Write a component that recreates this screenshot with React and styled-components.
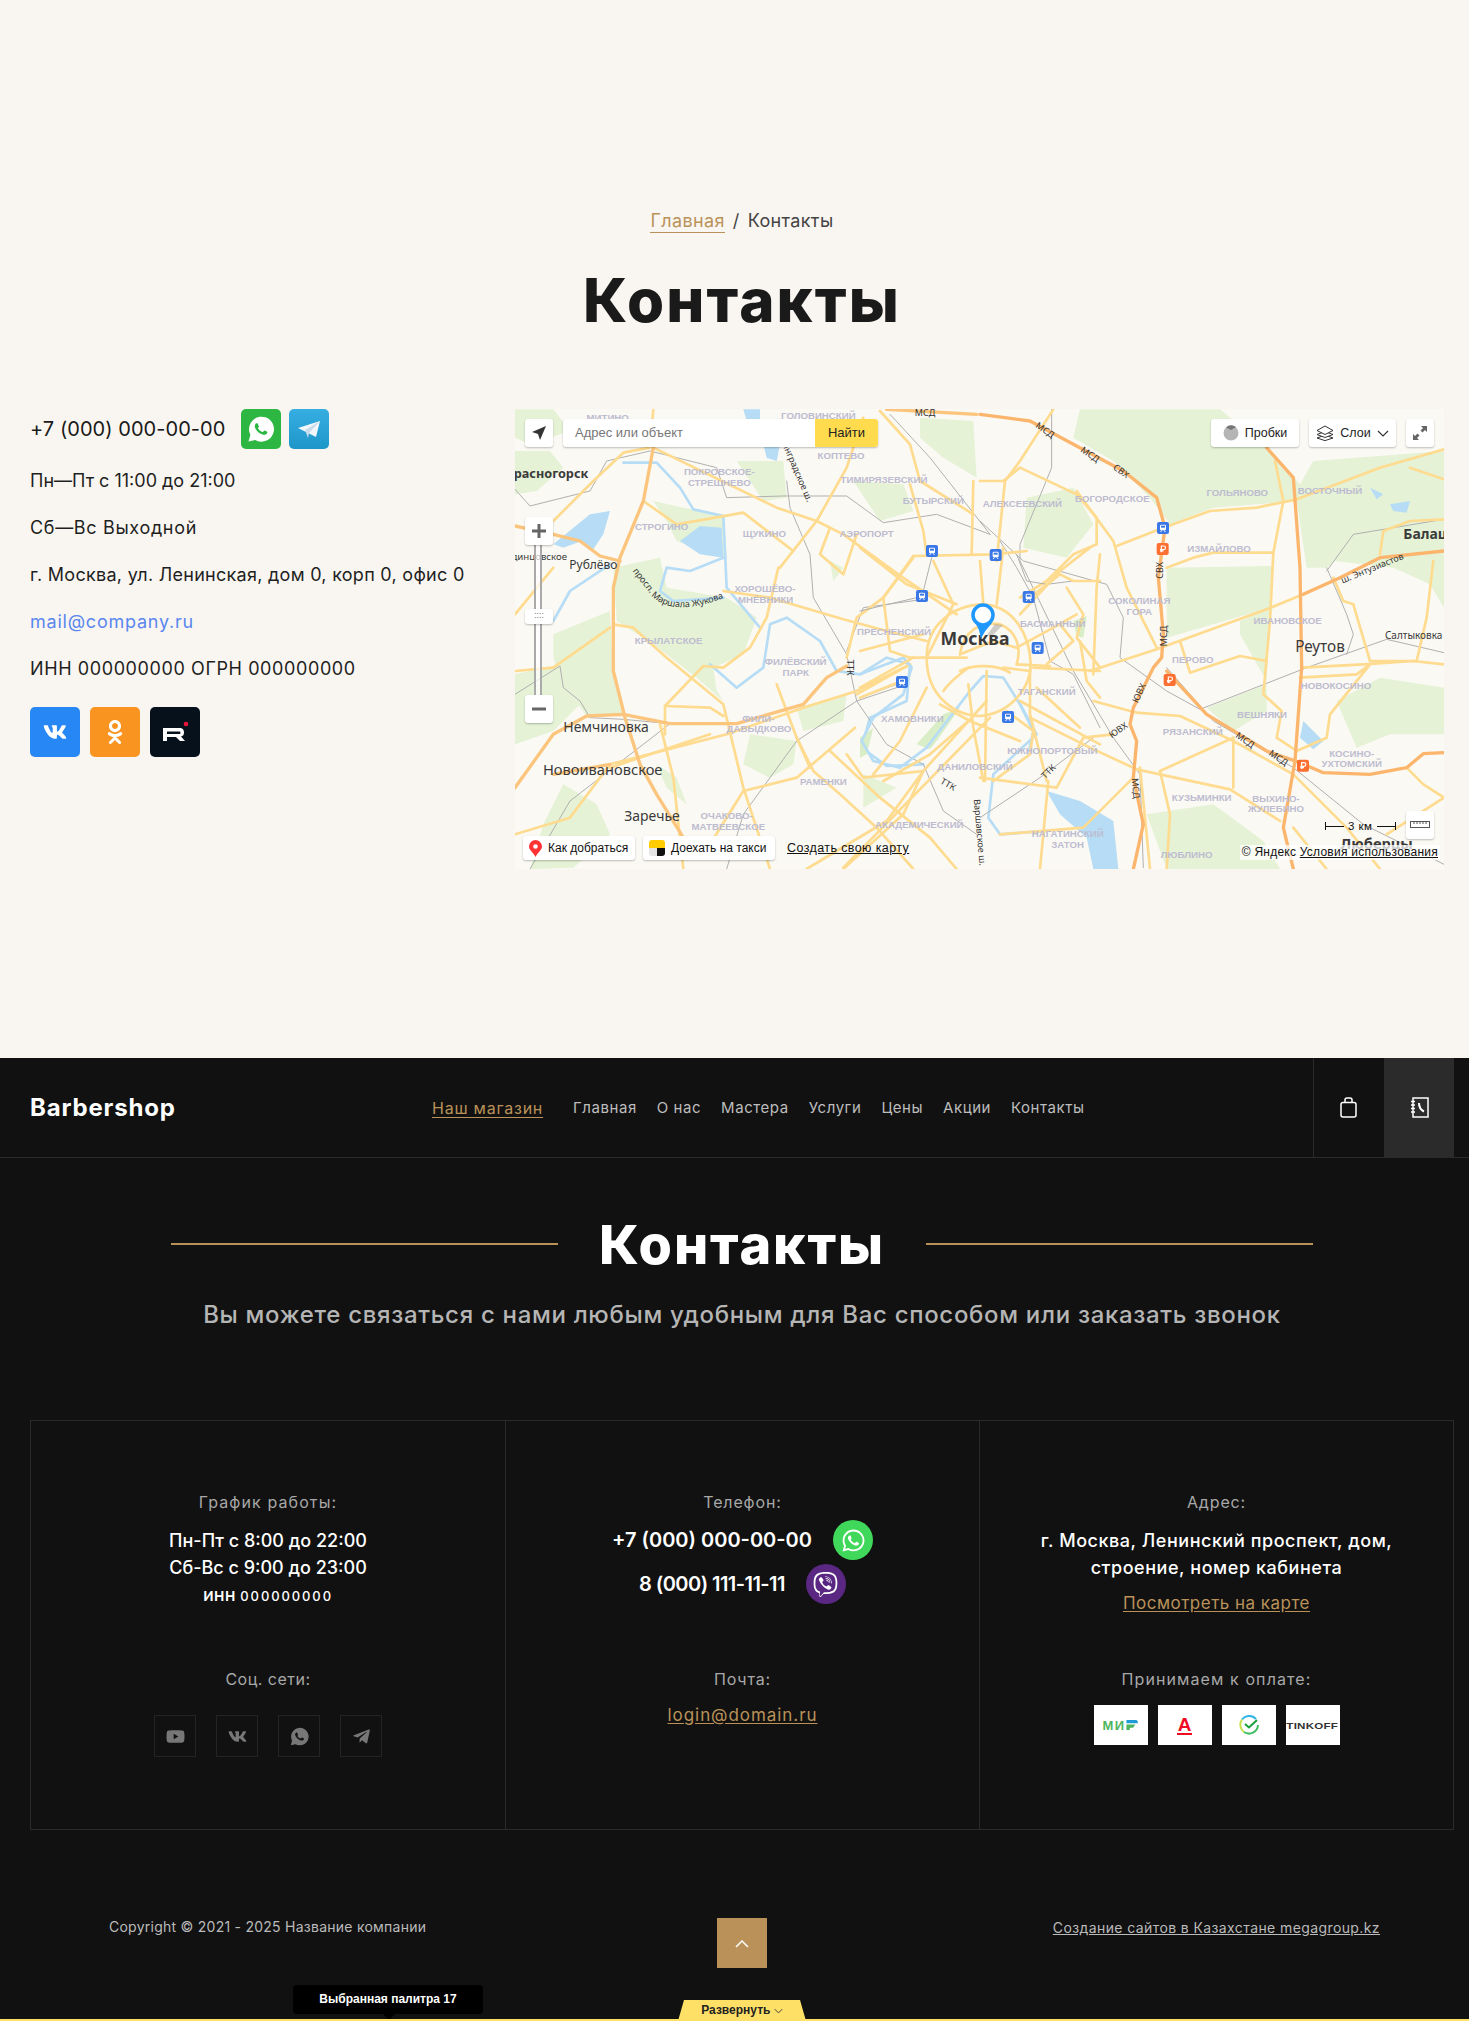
import React from "react";
import styled, { createGlobalStyle } from "styled-components";
import { FaYoutube, FaVk, FaWhatsapp, FaTelegramPlane, FaOdnoklassniki, FaViber } from "react-icons/fa";

const GlobalStyle = createGlobalStyle`
  html, body { margin: 0; padding: 0; background: #111; }
  * { box-sizing: border-box; }
  body { font-family: Inter, "Liberation Sans", sans-serif; }
  a { color: inherit; }
`;

const GOLD = "#ba9259";

const Page = styled.div`
  position: relative;
  width: 1469px;
  height: 2021px;
  overflow: hidden;
`;

/* top light section */
const LightSection = styled.section`
  height: 1058px;
  background: #f9f6f1;
  padding: 210px 15px 0 30px;
`;
const Crumbs = styled.div`
  display: flex;
  justify-content: center;
  gap: 8px;
  font-size: 18px;
  line-height: 22px;
  color: #444;
  letter-spacing: 0.02em;
`;
const CrumbLink = styled.a`
  color: ${GOLD};
  border-bottom: 1px solid ${GOLD};
`;
const PageTitle = styled.h1`
  margin: 31px 0 0;
  text-align: center;
  font-size: 60px;
  line-height: 72px;
  font-weight: 800;
  color: #1a1a1a;
  letter-spacing: 2.1px;
`;
const ContactsRow = styled.div`
  display: grid;
  grid-template-columns: 485px 929px;
  margin-top: 73px;
`;
const InfoColumn = styled.div`
  display: flex;
  flex-direction: column;
  align-items: flex-start;
`;
const PhoneRow = styled.div`
  display: flex;
  align-items: center;
  height: 40px;
  margin-bottom: 8px;
  font-size: 20px;
  color: #1a1a1a;
  letter-spacing: 0.05px;
`;
const PhoneTiles = styled.div`
  display: flex;
  gap: 8px;
  margin-left: 16px;
`;
const MessengerTile = styled.span`
  display: flex;
  align-items: center;
  justify-content: center;
  width: 40px;
  height: 40px;
  border-radius: 5px;
  background: ${(p) => p.$bg};
`;
const InfoLine = styled.div`
  height: 47px;
  line-height: 47px;
  font-size: 18px;
  color: ${(p) => p.$color || "#1f1f1f"};
  letter-spacing: ${(p) => p.$ls}px;
`;
const SocialRow = styled.div`
  display: flex;
  gap: 10px;
  margin-top: 15px;
`;
const SocialTile = styled.span`
  display: flex;
  align-items: center;
  justify-content: center;
  width: 50px;
  height: 50px;
  border-radius: 5px;
  background: ${(p) => p.$bg};
  color: #fff;
  font-size: 24px;
`;

/* map */
const MapBox = styled.div`
  position: relative;
  width: 929px;
  height: 460px;
  overflow: hidden;
  background: #faf8f2;
  font-family: "Liberation Sans", Arial, sans-serif;
`;
const MapPicture = styled.svg`
  display: block;
`;
const DistrictLabel = styled.text`
  font-family: "Liberation Sans", Arial, sans-serif;
  font-size: 29px;
  font-weight: 700;
  fill: #bdbcd0;
  text-anchor: middle;
`;
const CityLabel = styled.text`
  font-family: "Noto Sans", "Liberation Sans", sans-serif;
  font-size: ${(p) => p.$size || 42}px;
  font-weight: ${(p) => (p.$bold ? 700 : 400)};
  fill: #3a3a3a;
  text-anchor: ${(p) => p.$anchor || "middle"};
`;
const RoadLabel = styled.text`
  font-family: "Noto Sans", "Liberation Sans", sans-serif;
  font-size: 27px;
  fill: #333;
  text-anchor: middle;
`;
const MapTop = styled.div`
  position: absolute;
  top: 10px;
  left: 10px;
  right: 10px;
  display: flex;
  gap: 10px;
`;
const MapButton = styled.div`
  display: flex;
  align-items: center;
  justify-content: center;
  gap: 6px;
  height: 28px;
  min-width: 28px;
  width: ${(p) => p.$w || "28px"};
  background: #fff;
  border-radius: 3px;
  box-shadow: 0 1px 2px rgba(0, 0, 0, 0.25);
  font-size: 12.5px;
  color: #222;
`;
const SearchBox = styled.div`
  display: flex;
  width: 315px;
  height: 28px;
  background: #fff;
  border-radius: 3px;
  box-shadow: 0 1px 2px rgba(0, 0, 0, 0.25);
  overflow: hidden;
`;
const SearchInput = styled.div`
  flex: 1;
  padding-left: 12px;
  font-size: 13px;
  line-height: 28px;
  color: #777;
`;
const SearchSubmit = styled.div`
  width: 63px;
  text-align: center;
  background: #ffdb4d;
  font-size: 13px;
  line-height: 28px;
  color: #222;
`;
const TopSpacer = styled.div`
  flex: 1;
`;
const ZoomBar = styled.div`
  position: absolute;
  left: 10px;
  top: 108px;
  width: 28px;
  height: 206px;
  display: flex;
  flex-direction: column;
  align-items: center;
  justify-content: space-between;
`;
const ZoomTrack = styled.div`
  position: absolute;
  top: 20px;
  bottom: 20px;
  left: 9px;
  width: 8px;
  border-left: 2px solid #aaa;
  border-right: 2px solid #aaa;
  background: rgba(255, 255, 255, 0.7);
`;
const ZoomThumb = styled.div`
  position: absolute;
  top: 92px;
  left: 0;
  width: 28px;
  height: 15px;
  background: #fff;
  border-radius: 3px;
  box-shadow: 0 1px 2px rgba(0, 0, 0, 0.25);
  text-align: center;
  font-size: 9px;
  line-height: 13px;
  color: #777;
`;
const ZoomButton = styled(MapButton)`
  position: relative;
  font-size: 0;
`;
const MapBottom = styled.div`
  position: absolute;
  left: 8px;
  top: 427px;
  display: flex;
  align-items: center;
  gap: 8px;
`;
const RouteButton = styled.div`
  display: flex;
  align-items: center;
  gap: 6px;
  height: 24px;
  padding: 0 6px;
  width: ${(p) => p.$w};
  background: #fff;
  border-radius: 3px;
  box-shadow: 0 1px 2px rgba(0, 0, 0, 0.25);
  font-size: 12px;
  color: #111;
  white-space: nowrap;
`;
const MapLink = styled.a`
  margin-left: 4px;
  font-size: 12.5px;
  letter-spacing: 0.4px;
  color: #111;
  text-decoration: underline;
`;
const Attribution = styled.div`
  position: absolute;
  right: 4px;
  bottom: 9px;
  padding: 0 2px;
  background: rgba(255, 255, 255, 0.75);
  font-size: 12px;
  line-height: 15px;
  letter-spacing: 0.02em;
  color: #111;
  u { text-decoration: underline; }
`;
const ScaleBar = styled.div`
  position: absolute;
  left: 810px;
  top: 411px;
  display: flex;
  align-items: center;
  gap: 4px;
  font-size: 11.5px;
  letter-spacing: 0.5px;
  color: #111;
`;
const ScaleLine = styled.span`
  width: 19px;
  height: 8px;
  background: linear-gradient(#111, #111) center / 100% 1px no-repeat;
  border-left: ${(p) => (p.$left ? "1px solid #111" : "none")};
  border-right: ${(p) => (p.$left ? "none" : "1px solid #111")};
`;
const RulerButton = styled(MapButton)`
  position: absolute;
  left: 891px;
  top: 402px;
`;

/* dark part */
const DarkSection = styled.section`
  height: 963px;
  background: #111;
  color: #fff;
`;
const Header = styled.header`
  display: flex;
  align-items: center;
  height: 100px;
  padding: 0 15px 0 30px;
  border-bottom: 1px solid #2a2a2a;
`;
const Logo = styled.div`
  width: 402px;
  font-size: 24px;
  font-weight: 700;
  letter-spacing: 0.035em;
`;
const ShopLink = styled.a`
  margin-right: 30px;
  font-size: 16px;
  color: ${GOLD};
  text-decoration: underline;
  text-underline-offset: 3px;
  letter-spacing: 0.77px;
`;
const Nav = styled.nav`
  display: flex;
  gap: 20px;
  font-size: 15px;
  color: #bdbdbd;
  letter-spacing: 0.55px;
`;
const HeaderIcons = styled.div`
  display: flex;
  align-self: stretch;
  margin-left: auto;
  border-left: 1px solid #2a2a2a;
`;
const HeaderCell = styled.div`
  display: flex;
  align-items: center;
  justify-content: center;
  width: 70px;
  background: ${(p) => (p.$active ? "#2b2b2b" : "transparent")};
`;
const CenterWrap = styled.div`
  padding: 0 15px 0 30px;
`;
const SectionHead = styled.div`
  display: flex;
  align-items: center;
  justify-content: center;
  gap: 41px;
  margin-top: 50px;
`;
const HeadLine = styled.span`
  width: 387px;
  height: 2px;
  background: ${GOLD};
  margin-top: -2px;
`;
const SectionTitle = styled.h2`
  margin: 0;
  font-size: 54px;
  line-height: 74px;
  font-weight: 800;
  letter-spacing: 0.035em;
`;
const SectionLead = styled.p`
  margin: 18px 0 0;
  text-align: center;
  font-size: 24px;
  line-height: 30px;
  font-weight: 500;
  color: #b5b5b5;
  letter-spacing: 0.68px;
`;
const InfoGrid = styled.div`
  display: grid;
  grid-template-columns: 474px 474px 1fr;
  width: 1424px;
  height: 410px;
  margin: 90px 0 0 30px;
  border: 1px solid #2a2a2a;
`;
const InfoCell = styled.div`
  padding-top: 69px;
  text-align: center;
  border-left: ${(p) => (p.$first ? "none" : "1px solid #2a2a2a")};
`;
const InfoBlock = styled.div`
  display: flex;
  flex-direction: column;
  align-items: center;
  height: 177px;
  &:last-child { height: auto; }
`;
const BlockLabel = styled.div`
  height: 24px;
  line-height: 24px;
  font-size: 16px;
  color: #a8a8a8;
  letter-spacing: ${(p) => p.$ls ?? 0.86}px;
`;
const BlockValue = styled.div`
  margin-top: 13px;
  font-size: 18px;
  line-height: 27px;
  font-weight: 500;
  letter-spacing: ${(p) => p.$ls}px;
`;
const SmallZero = styled.span`
  font-size: 13px;
  letter-spacing: 1.9px;
`;
const PhoneLine = styled.div`
  display: flex;
  align-items: center;
  gap: 21px;
  height: 40px;
  font-size: 20px;
  font-weight: 600;
  letter-spacing: ${(p) => p.$ls}px;
  & + & { margin-top: 4px; }
`;
const RoundIcon = styled.span`
  display: flex;
  align-items: center;
  justify-content: center;
  width: 40px;
  height: 40px;
  border-radius: 50%;
  background: ${(p) => p.$bg};
  color: #fff;
  font-size: 25px;
`;
const PhoneStack = styled.div`
  margin-top: 6px;
  display: flex;
  flex-direction: column;
  align-items: center;
`;
const GoldLink = styled.a`
  display: block;
  margin-top: ${(p) => p.$top}px;
  font-size: 17px;
  line-height: 24px;
  color: ${GOLD};
  text-decoration: underline;
  text-underline-offset: 2px;
  letter-spacing: ${(p) => p.$ls}px;
`;
const DarkSocials = styled.div`
  display: flex;
  gap: 20px;
  margin-top: 24px;
`;
const DarkSocial = styled.span`
  display: flex;
  align-items: center;
  justify-content: center;
  width: 42px;
  height: 42px;
  border: 1px solid #242424;
  color: #777;
  font-size: 19px;
`;
const PayRow = styled.div`
  display: flex;
  gap: 10px;
  margin-top: 14px;
`;
const PayCard = styled.div`
  display: flex;
  align-items: center;
  justify-content: center;
  width: 54px;
  height: 40px;
  background: #fff;
  font-family: "Liberation Sans", Arial, sans-serif;
  font-weight: 700;
`;
const MirMark = styled.span`
  display: flex;
  align-items: center;
  gap: 1px;
  font-size: 13px;
  letter-spacing: 0.1em;
  color: #4db45e;
`;
const AlfaMark = styled.span`
  font-size: 19px;
  line-height: 17px;
  color: #ef0c24;
  border-bottom: 2px solid #ef0c24;
  padding: 0 1px;
`;
const TinkoffMark = styled.span`
  font-size: 9.5px;
  letter-spacing: 0.02em;
  color: #333;
  transform: scaleX(1.22);
`;
const Footer = styled.footer`
  display: grid;
  grid-template-columns: 717px 50px 1fr;
  align-items: start;
  margin-top: 88px;
  padding-right: 89px;
`;
const Copyright = styled.div`
  padding: 0 0 0 109px;
  font-size: 14px;
  line-height: 18px;
  letter-spacing: 0.25px;
  color: #bbb;
`;
const ToTop = styled.div`
  display: flex;
  align-items: center;
  justify-content: center;
  height: 50px;
  background: ${GOLD};
`;
const MadeBy = styled.a`
  justify-self: end;
  font-size: 14px;
  line-height: 20px;
  letter-spacing: 0.4px;
  color: #bbb;
  text-decoration: underline;
`;

/* editor strip over the page */
const PaletteTip = styled.div`
  position: absolute;
  left: 293px;
  top: 1985px;
  width: 190px;
  height: 29px;
  background: #000;
  border-radius: 4px;
  font-family: "Liberation Sans", Arial, sans-serif;
  font-size: 12px;
  font-weight: 700;
  line-height: 29px;
  text-align: center;
  color: #fff;
  &::after {
    content: "";
    position: absolute;
    left: 90px;
    bottom: -6px;
    border: 6px solid transparent;
    border-bottom: 0;
    border-top-color: #000;
  }
`;
const EditorLine = styled.div`
  position: absolute;
  left: 0;
  right: 0;
  bottom: 0;
  height: 2px;
  background: #ffe066;
`;
const ExpandTab = styled.div`
  position: absolute;
  left: 678px;
  bottom: 0;
  width: 128px;
  height: 21px;
  background: #ffe066;
  clip-path: polygon(6px 0, 122px 0, 128px 100%, 0 100%);
  font-family: "Liberation Sans", Arial, sans-serif;
  font-size: 12px;
  font-weight: 700;
  line-height: 21px;
  text-align: center;
  color: #222;
`;

/* map data, traced at 3x: west part, east part and the city centre */
const westGreen = [
  "M310 500L450 470L470 560L650 590L740 650L700 760L610 800L620 870L640 900L560 830L430 730L320 660Z",
  "M130 700L300 630L310 810L345 940L230 945L140 820L130 760Z",
  "M15 820L150 790L210 910L130 990L15 1030Z",
  "M430 300L520 320L640 340L650 470L500 420L470 360Z",
  "M15 150L120 150L160 200L80 270L15 280Z",
  "M1230 50L1390 60L1400 230L1300 170L1230 110Z",
  "M1030 240L1180 250L1210 330L1110 360Z",
  "M680 180L820 180L830 290L760 300Z",
  "M860 920L1010 880L1000 960L880 990Z",
  "M160 1150L260 1210L300 1300L190 1400L60 1404L100 1270Z",
  "M440 1090L500 1130L530 1210L470 1160Z",
  "M720 1000L860 1020L850 1090L780 1130L700 1090Z",
  "M15 25L130 25L180 90L60 130L15 110Z",
  "M1060 1120L1160 1160L1060 1220Z",
  "M960 480L1000 500L970 540Z",
];
const eastGreen = [
  "M300 25L720 25L860 140L960 250L1000 180L1392 150L1392 350L1200 370L1040 500L980 500L950 300L700 320L570 370L510 290L400 180L280 110Z",
  "M560 500L880 495L870 620L560 710Z",
  "M780 660L870 620L860 840L780 700Z",
  "M140 290L280 260L340 370L260 470L130 440Z",
  "M980 470L1200 370L1392 350L1392 620L1350 550L1240 500Z",
  "M1070 900L1200 830L1392 860L1392 1000L1230 1000L1130 1040Z",
  "M680 920L860 850L860 930L760 990Z",
  "M500 1240L700 1210L850 1320L900 1404L560 1404Z",
];
const westWater = [
  "M130 430L240 340L300 330L280 400L250 445L215 420L160 440Z",
  "M510 420L570 375L635 380L640 470L570 460Z",
  "M760 130L810 130L800 180L770 170Z",
  "M700 25L750 25L750 60L710 60Z",
];
const westRivers = [
  "M340 185L440 185L510 260L550 325L640 345L650 560L700 620L750 680",
  "M640 470L540 510L470 500L450 570L490 600L640 590",
  "M130 660L180 570L300 490",
  "M600 790L680 860L760 800L780 670L830 650L930 720L980 810L1050 820L1130 770L1200 790L1190 900L1080 950L1055 1040L1130 1095L1240 1090",
];
const eastRivers = ["M120 909L170 1000L40 1120L25 1250L60 1300L200 1290"];
const eastWater = [
  "M200 1170L300 1200L400 1260L415 1404L340 1404L320 1310L240 1240Z",
  "M1230 310L1290 300L1280 335L1240 330Z",
  "M970 960L1030 1020L1000 1045L960 1010Z",
  "M1170 260L1210 280L1190 295Z",
];
const westRoads = [
  "M430 140L800 320L920 360L1000 400L1165 520L1340 640",
  "M810 500L920 360L1010 200L1060 50",
  "M805 500L770 650L720 740L640 800L580 795L465 915L465 1000",
  "M130 360L250 240L340 155L420 140L430 25",
  "M310 670L370 680L470 770L640 910L700 1160L780 1404",
  "M640 570L780 590L1000 655L1130 690L1250 720",
  "M1210 465L1120 590L1040 650L1010 770",
  "M1200 790L1040 880",
  "M15 1300L180 1250L300 1090L650 1000L880 920L1040 870L1200 790",
  "M860 1010L910 1110L990 1180L1100 1280L1210 1404",
  "M960 1050L1110 1190L1260 1310L1340 1404",
  "M1035 980L860 1130L700 1170L600 1330",
  "M1240 1110L1180 1240L1000 1404",
  "M1430 900L1240 1110L1060 1130L1010 1060",
  "M1240 1110L1130 1260L890 1404",
  "M450 970L490 1130L520 1404",
  "M800 850L860 1010L900 1100",
  "M400 300L500 370L700 335L850 450",
  "M1040 400L1000 520L930 460L960 380",
  "M1390 240L1385 460",
  "M1200 250L1240 390L1250 460",
  "M1110 30L1200 130L1230 240L1390 340",
  "M1000 1400L1440 950",
  "M15 810L130 800L300 680",
  "M130 500L15 640",
  "M300 1100L600 1000",
  "M465 915L600 920L640 945",
];
const eastRoads = [
  "M0 240L70 240L120 200L290 280L350 350L350 430L280 460L200 540L120 590",
  "M220 25L120 180L75 240L50 480",
  "M340 820L350 560L360 460",
  "M290 270L400 420L440 560L530 740",
  "M330 810L530 745L860 625L970 580",
  "M550 380L690 330L830 320L950 295L1200 200L1392 145",
  "M410 435L550 380",
  "M1290 200L1392 235",
  "M560 500L640 470L700 455L880 455L910 300L885 180",
  "M880 455L870 660L850 880L905 930L890 1010L950 1050",
  "M600 720L630 815L780 765L860 780",
  "M340 900L470 935L600 945L760 1020L940 1120L1100 1280L1200 1404",
  "M0 1130L230 1160L310 1010L400 1000",
  "M150 950L330 1040L470 1105L750 1165L900 1260",
  "M540 1110L760 1010L760 1160",
  "M540 1110L570 1240L560 1404",
  "M205 1140L180 1404",
  "M480 1100L510 1404",
  "M60 1300L310 1280L460 1130",
  "M965 800L1150 790L1300 780L1392 790",
  "M1170 780L1120 610L1090 600L1060 530",
  "M960 830L1130 820L1170 790L1050 940L1040 1010L950 1050",
  "M1170 780L1310 780L1340 650L1360 480",
  "M1280 1100L1330 1150L1392 1190L1220 1300",
  "M1200 460L1210 390L1290 360L1392 355",
  "M940 1280L1040 1404",
];
const westHighways = [
  "M430 140L400 300L330 470L310 560L310 810L345 950L390 1090L440 1180L520 1310",
  "M15 375L130 400L210 420L270 465L330 480",
  "M15 1160L130 1000L230 945L340 940L480 968L680 968L880 910L950 830L1010 795",
  "M1130 25L1400 40",
  "M130 1120L300 1090",
];
const eastHighways = [
  "M0 40L150 60L280 130L430 210L530 290L555 380L535 530L550 700L545 770L520 800L460 920L450 970L470 1020L460 1130L490 1270L460 1404",
  "M560 810L680 940L860 1050L960 1085L1030 1115L1170 1120L1280 1100L1330 1058L1392 1055",
  "M970 580L1080 530L1200 470L1392 450",
  "M860 140L940 230L960 500L965 800L945 1080L910 1280L940 1404",
];
const westRails = [
  "M15 265L60 315L240 270L290 180L420 150L620 200L650 290L820 285L1010 285L1120 365L1280 340L1440 400",
  "M15 880L150 795L160 860L210 900L240 950L340 955L480 968L180 1200L60 1404",
  "M1140 40L1260 170L1440 400",
  "M830 240L840 320L900 460L910 590L1010 760L1040 900L1130 1030L1240 1090L1300 1230L1400 1300",
  "M1240 595L1060 620L1010 750",
  "M1160 860L1040 900L860 1020L700 1240L650 1404",
];
const eastRails = [
  "M215 25L215 200L120 430L120 480L280 810L400 1010L480 1120L490 1400",
  "M0 360L130 480L380 550L430 650L420 770L560 870L660 925L980 800L1220 715L1392 755",
  "M1040 500L1100 640L1120 700L1100 760",
  "M1040 510L1120 400L1392 355",
  "M560 800L700 960L940 1100L1150 1270L1392 1390",
  "M0 1250L180 1130L340 1010",
];
const centerGreen = [
  "M250 520L300 500L230 600L210 625L170 610Z",
  "M640 240L680 225L670 290L650 285Z",
  "M0 590L40 560L20 640L0 650Z",
];
const centerRivers = [
  "M200 620L330 450L370 405L430 410L480 490L520 570L505 640",
  "M0 400L130 350L155 380L130 460L40 530L5 600L40 660L120 680L200 620",
];
const centerRails = [
  "M420 0L470 80L520 170L570 360L640 400L720 560",
  "M0 210L170 170",
  "M470 40L500 120L560 130L640 120L720 120",
  "M0 470L110 430",
  "M215 50L190 150",
];
const centerRoads = [
  "M200 350C200 250 280 192 370 190C460 195 510 280 512 370C512 450 440 520 360 525C290 525 200 470 200 350Z",
  "M300 340C310 270 360 240 420 250C470 270 485 320 470 370",
  "M300 390C340 370 410 370 450 395",
  "M250 450C270 420 300 400 325 380",
  "M0 20L140 130L290 190",
  "M160 45L400 40L500 30",
  "M160 50L70 170L90 330L150 350L320 350",
  "M220 60L280 190",
  "M360 60L370 190",
  "M430 20L410 190",
  "M510 170L600 100L640 120L720 120",
  "M480 220L600 90L690 20",
  "M620 140L670 220L650 290L720 380",
  "M470 320L580 260L650 220",
  "M520 380L720 390",
  "M470 370L570 375",
  "M510 390L510 520L560 720",
  "M0 330L190 280",
  "M0 440L160 350",
  "M200 440L120 600L40 700",
  "M240 490L330 540L480 600",
  "M325 540L210 640L70 720",
  "M380 390L375 720",
  "M325 430L340 560L370 720",
  "M480 480L720 610",
  "M440 510L520 570L510 640L400 720",
  "M0 470L125 420",
  "M530 440L660 560",
  "M660 300L680 420L720 470",
  "M600 250L640 300L560 370",
  "M280 190L200 350",
  "M300 340L400 300L470 320",
  "M430 380L510 390",
];
const westDistricts = [
  ["МИТИНО", 293, 60], ["ГОЛОВИНСКИЙ", 925, 54], ["КОПТЕВО", 993, 174], ["ПОКРОВСКОЕ-", 628, 223],
  ["СТРЕШНЕВО", 628, 255], ["ТИМИРЯЗЕВСКИЙ", 1122, 247], ["БУТЫРСКИЙ", 1270, 308], ["СТРОГИНО", 455, 386],
  ["ЩУКИНО", 763, 408], ["АЭРОПОРТ", 1070, 407], ["ХОРОШЁВО-", 765, 573], ["МНЁВНИКИ", 767, 605],
  ["ПРЕСНЕНСКИЙ", 1152, 701], ["КРЫЛАТСКОЕ", 476, 730], ["ФИЛЁВСКИЙ", 857, 792], ["ПАРК", 857, 824],
  ["ХАМОВНИКИ", 1207, 964], ["ФИЛИ-", 745, 962], ["ДАВЫДКОВО", 747, 994], ["РАМЕНКИ", 940, 1152],
  ["ОЧАКОВО-", 650, 1254], ["МАТВЕЕВСКОЕ", 655, 1286], ["АКАДЕМИЧЕСКИЙ", 1228, 1280], ["ДАНИЛОВСКИЙ", 1395, 1108],
];
const eastDistricts = [
  ["АЛЕКСЕЕВСКИЙ", 127, 317], ["БОГОРОДСКОЕ", 397, 303], ["ГОЛЬЯНОВО", 772, 284], ["ВОСТОЧНЫЙ", 1050, 278],
  ["ИЗМАЙЛОВО", 717, 454], ["СОКОЛИНАЯ", 478, 610], ["ГОРА", 478, 642], ["БАСМАННЫЙ", 218, 677],
  ["ИВАНОВСКОЕ", 923, 668], ["ПЕРОВО", 638, 787], ["НОВОКОСИНО", 1068, 863], ["ТАГАНСКИЙ", 200, 883],
  ["ВЕШНЯКИ", 846, 951], ["РЯЗАНСКИЙ", 638, 1001], ["КОСИНО-", 1115, 1067], ["УХТОМСКИЙ", 1115, 1098],
  ["ЮЖНОПОРТОВЫЙ", 217, 1058], ["КУЗЬМИНКИ", 665, 1200], ["ВЫХИНО-", 888, 1202], ["ЖУЛЕБИНО", 888, 1234],
  ["НАГАТИНСКИЙ", 263, 1309], ["ЗАТОН", 263, 1341], ["ЛЮБЛИНО", 620, 1372],
];
const eastRoadNames = [
  ["МСД", 190, 95, 35], ["МСД", 325, 168, 35], ["СВХ", 418, 218, 35], ["СВХ", 550, 508, -90],
  ["МСД", 560, 705, -90], ["ЮВХ", 486, 880, -65], ["ЮВХ", 420, 995, -35], ["ТТК", 212, 1118, -45],
  ["МСД", 458, 1163, 85], ["МСД", 790, 1025, 35], ["МСД", 890, 1078, 35], ["ш. Энтузиастов", 1180, 510, -22],
];
const westRoadNames = [["ТТК", 1010, 800, 90], ["ТТК", 1310, 1158, 30], ["МСД", 1245, 45, 0], ["Варшавское ш.", 1400, 1295, 85]];
const blueStops = [[549, 381], [47, 462], [146, 588], [173, 741], [84, 948]];
const blueStopsWest = [[1266, 450], [1236, 585], [1176, 843]];
const orangeStops = [[548, 444], [569, 837], [969, 1094]];

const Lines = ({ items, color, width }) => (
  <g fill="none" stroke={color} strokeWidth={width} strokeLinejoin="round" strokeLinecap="round">
    {items.map((d) => (
      <path key={d} d={d} />
    ))}
  </g>
);
const Areas = ({ items, color }) => (
  <g fill={color}>
    {items.map((d) => (
      <path key={d} d={d} />
    ))}
  </g>
);
const Stop = ({ x, y, color, rub }) => (
  <g transform={`translate(${x - 18} ${y - 18})`}>
    <rect width="36" height="36" rx="6" fill={color} />
    {rub ? (
      <path d="M14 28V9h7a5 5 0 0 1 0 11h-11M10 24h11" fill="none" stroke="#fff" strokeWidth="3.5" />
    ) : (
      <g>
        <rect x="9" y="8" width="18" height="17" rx="4" fill="#fff" />
        <rect x="12" y="11" width="12" height="6" fill={color} />
        <path d="M11 30l3-5M25 30l-3-5" stroke="#fff" strokeWidth="3" />
      </g>
    )}
  </g>
);

const MoscowMap = () => (
  <MapPicture width="929" height="460" viewBox="0 0 929 460">
    <rect width="929" height="460" fill="#fbf9f3" />
    <g transform="translate(-5 -8) scale(.33333)">
      <Areas items={westGreen} color="#e5f2d6" />
      <Areas items={westWater} color="#b6ddf5" />
      <Lines items={westRivers} color="#b6ddf5" width={8} />
      <Lines items={westRails} color="#b0b0b0" width={3} />
      <Lines items={westRoads} color="#fedb8e" width={8} />
      <Lines items={westHighways} color="#fcc57e" width={10} />
    </g>
    <g transform="translate(465 -8) scale(.33333)">
      <Areas items={eastGreen} color="#e5f2d6" />
      <Areas items={eastWater} color="#b6ddf5" />
      <Lines items={eastRivers} color="#b6ddf5" width={8} />
      <Lines items={eastRails} color="#b0b0b0" width={3} />
      <Lines items={eastRoads} color="#fedb8e" width={8} />
      <Lines items={eastHighways} color="#fcb56c" width={10} />
    </g>
    <g transform="translate(345 132) scale(.33333)">
      <Areas items={centerGreen} color="#d9edc6" />
      <Lines items={centerRivers} color="#b6ddf5" width={8} />
      <Lines items={centerRails} color="#b0b0b0" width={3} />
      <Lines items={centerRoads} color="#fedb8e" width={8} />
    </g>
    <g transform="translate(-5 -8) scale(.33333)">
      {westDistricts.map(([t, x, y]) => (
        <DistrictLabel key={t} x={x} y={y}>{t}</DistrictLabel>
      ))}
      {westRoadNames.map(([t, x, y, r]) => (
        <RoadLabel key={t + x} transform={`translate(${x} ${y}) rotate(${r})`}>{t}</RoadLabel>
      ))}
      <path id="zhukova" d="M358 498L430 590Q500 650 655 585" fill="none" />
      <RoadLabel>
        <textPath href="#zhukova" startOffset="50%">просп. Маршала Жукова</textPath>
      </RoadLabel>
      <path id="lening" d="M770 30L830 160L915 360" fill="none" />
      <RoadLabel>
        <textPath href="#lening" startOffset="50%">Ленинградское ш.</textPath>
      </RoadLabel>
      <CityLabel x="235" y="232" $anchor="end" $bold $size={38}>Красногорск</CityLabel>
      <CityLabel x="250" y="503" $size={36}>Рублёво</CityLabel>
      <CityLabel x="77" y="476" $size={29}>Одинцовское</CityLabel>
      <CityLabel x="288" y="992">Немчиновка</CityLabel>
      <CityLabel x="278" y="1122" $size={44}>Новоивановское</CityLabel>
      <CityLabel x="426" y="1259">Заречье</CityLabel>
      {blueStopsWest.map(([x, y]) => (
        <Stop key={x} x={x} y={y} color="#3b78e7" />
      ))}
    </g>
    <g transform="translate(465 -8) scale(.33333)">
      {eastDistricts.map(([t, x, y]) => (
        <DistrictLabel key={t} x={x} y={y}>{t}</DistrictLabel>
      ))}
      {eastRoadNames.map(([t, x, y, r]) => (
        <RoadLabel key={t + x} transform={`translate(${x} ${y}) rotate(${r})`}>{t}</RoadLabel>
      ))}
      <CityLabel x="1270" y="415" $anchor="start" $bold>Балашиха</CityLabel>
      <CityLabel x="1020" y="752" $size={46}>Реутов</CityLabel>
      <CityLabel x="1215" y="714" $anchor="start" $size={30}>Салтыковка</CityLabel>
      <CityLabel x="1190" y="1345" $bold $size={44}>Люберцы</CityLabel>
      <CityLabel x="-15" y="732" $size={53} $bold>Москва</CityLabel>
      {blueStops.map(([x, y]) => (
        <Stop key={x} x={x} y={y} color="#3b78e7" />
      ))}
      {orangeStops.map(([x, y]) => (
        <Stop key={x} x={x} y={y} color="#fd6f30" rub />
      ))}
    </g>
    {/* pin */}
    <path d="M472 226l8-11 8 1-10 10z" fill="#777" opacity=".35" />
    <path d="M460 214Q465 220 465.700 230Q470 221 477 214Z" fill="#1e98ff" />
    <circle cx="468" cy="206" r="10" fill="#fff" stroke="#1e98ff" strokeWidth="3.500" />
  </MapPicture>
);

const GeoIcon = () => (
  <svg width="16" height="16" viewBox="0 0 16 16"><path d="M15 1L1 7l6 2 2 6z" fill="#333" /></svg>
);
const PlusIcon = ({ minus }) => (
  <svg width="14" height="14" viewBox="0 0 14 14">
    <rect x="0" y="5.5" width="14" height="3" fill="#666" />
    {!minus && <rect x="5.5" y="0" width="3" height="14" fill="#666" />}
  </svg>
);
const TrafficIcon = () => (
  <svg width="16" height="16" viewBox="0 0 16 16">
    <circle cx="8" cy="8" r="7.5" fill="#b5b5b5" />
    <path d="M3 2.5A7.5 7.5 0 0 1 13 2L8 5z" fill="#777" />
  </svg>
);
const LayersIcon = () => (
  <svg width="18" height="16" viewBox="0 0 18 16" fill="#fff" stroke="#333">
    <path d="M9 10l8 3-8 2.6L1 13z" />
    <path d="M9 6.5l8 3-8 3-8-3z" />
    <path d="M9 1l8 4.5-8 4-8-4z" />
  </svg>
);
const ChevronDown = ({ stroke = "#333", w = 12, h = 7 }) => (
  <svg width={w} height={h} viewBox="0 0 12 7" fill="none" stroke={stroke} strokeWidth="1.2"><path d="M1 1l5 5 5-5" /></svg>
);
const ExpandIcon = () => (
  <svg width="14" height="14" viewBox="0 0 14 14" fill="#666">
    <path d="M14 0v6l-2-2-2.5 2.5-2-2L10 2 8 0zM0 14V8l2 2 2.5-2.5 2 2L4 12l2 2z" />
  </svg>
);
const RulerIcon = () => (
  <svg width="20" height="8" viewBox="0 0 20 8" fill="none" stroke="#555">
    <rect x=".5" y=".5" width="19" height="6" />
    <path d="M4 1v2M7 1v2M10 1v2M13 1v2M16 1v2" />
  </svg>
);
const RoutePin = () => (
  <svg width="13" height="17" viewBox="0 0 13 17">
    <path d="M6.500 17C4 12 0 10 0 6.500a6.500 6.500 0 0 1 13 0C13 10 9 12 6.500 17z" fill="#f33" />
    <circle cx="6.500" cy="6.500" r="2.300" fill="#fff" />
  </svg>
);
const TaxiIcon = () => (
  <svg width="16" height="16" viewBox="0 0 16 16">
    <path d="M0 8V3a3 3 0 0 1 3-3h10a3 3 0 0 1 3 3v5z" fill="#fc0" />
    <path d="M0 8h8v8H3a3 3 0 0 1-3-3z" fill="#e4e4e4" />
    <path d="M8 8h8v5a3 3 0 0 1-3 3H8z" fill="#111" />
  </svg>
);
const WhatsappFilled = ({ size = 30, bubble = "#fff", phone = "#2db742" }) => (
  <svg width={size} height={size} viewBox="0 0 24 24">
    <path d="M2 22l1.500-5.300A10 10 0 1 1 7.400 20.800z" fill={bubble} />
    <path d="M16.600 14c-.2-.1-1.500-.7-1.700-.8-.2-.1-.4-.1-.6.1-.2.2-.6.8-.8 1-.1.2-.3.2-.5.1-.7-.3-1.400-.7-2-1.200-.5-.5-1-1.100-1.400-1.700-.1-.2 0-.4.1-.5.1-.1.2-.3.4-.4.1-.1.2-.3.2-.4.1-.1.1-.3 0-.4-.1-.1-.6-1.300-.8-1.800-.1-.7-.3-.7-.5-.7h-.5c-.2 0-.5.2-.6.3-.6.6-.9 1.300-.9 2.100.1.9.4 1.800 1 2.600 1.100 1.600 2.500 2.900 4.200 3.700.5.2.9.4 1.400.5.5.2 1 .2 1.600.1.7-.1 1.300-.6 1.700-1.200.2-.4.2-.8.1-1.200z" fill={phone} />
  </svg>
);
const TelegramFilled = () => (
  <svg width="24" height="20" viewBox="0 0 24 20">
    <path d="M1 9L23 2 19 18z" fill="#f2f7fb" />
    <path d="M8 11L23 2 12 14l-1 5z" fill="#c8dcec" />
  </svg>
);
const RutubeMark = () => (
  <svg width="32" height="26" viewBox="0 0 32 26">
    <path d="M4 9h16c4 0 5 2 5 4.500S24 17 22 17.500L26 22h-5l-4-4H8v4H4zM8 12.500v2.500h12c1 0 1.500-.4 1.500-1.300s-.5-1.200-1.500-1.200z" fill="#fff" />
    <circle cx="27" cy="5" r="2.300" fill="#ed143b" />
  </svg>
);
const BagIcon = () => (
  <svg width="18" height="21" viewBox="0 0 18 21" fill="none" stroke="#fff" strokeWidth="1.500">
    <rect x="1" y="5.500" width="15" height="14.500" rx="2" />
    <path d="M5 5.500V3a2 2 0 0 1 2-2h3a2 2 0 0 1 2 2v2.500" />
  </svg>
);
const BookIcon = () => (
  <svg width="19" height="21" viewBox="0 0 19 21" fill="none" stroke="#fff" strokeWidth="1.500">
    <rect x="3" y="1" width="15" height="19" />
    <path d="M1 4.500h4M1 8h4M1 11.500h4M1 15h4" />
    <path d="M9 6c0 4 2 7 5 8.500" strokeWidth="2" />
  </svg>
);
const UpIcon = () => (
  <svg width="14" height="9" viewBox="0 0 14 9" fill="none" stroke="#fff" strokeWidth="1.500"><path d="M1 8l6-6 6 6" /></svg>
);
const MirFlag = () => (
  <svg width="12" height="10" viewBox="0 0 10 9">
    <path d="M0 0h8a2 2 0 0 1 2 3H0z" fill="#1e9bd6" />
    <path d="M0 4h8L6 7H3v2H0z" fill="#4db45e" />
  </svg>
);
const SberIcon = () => (
  <svg width="20" height="20" viewBox="0 0 20 20" fill="none" strokeWidth="2">
    <path d="M17 4A9 9 0 0 0 3 4.500" stroke="#35b6e8" />
    <path d="M3 4.500A9 9 0 0 0 5 17" stroke="#c5e04b" />
    <path d="M5 17A9 9 0 0 0 19 10" stroke="#3fbf62" />
    <path d="M6 9l4 3.500L18 5" stroke="#1a9f3c" />
  </svg>
);

const navItems = ["Главная", "О нас", "Мастера", "Услуги", "Цены", "Акции", "Контакты"];

export default function App() {
  return (
    <Page>
      <GlobalStyle />
      <LightSection>
        <Crumbs>
          <CrumbLink>Главная</CrumbLink>
          <span>/</span>
          <span>Контакты</span>
        </Crumbs>
        <PageTitle>Контакты</PageTitle>
        <ContactsRow>
          <InfoColumn>
            <PhoneRow>
              +7 (000) 000-00-00
              <PhoneTiles>
                <MessengerTile $bg="#2db742"><WhatsappFilled /></MessengerTile>
                <MessengerTile $bg="linear-gradient(#37aee2, #1e96c8)"><TelegramFilled /></MessengerTile>
              </PhoneTiles>
            </PhoneRow>
            <InfoLine $ls={0}>Пн—Пт с 11:00 до 21:00</InfoLine>
            <InfoLine $ls={0.67}>Сб—Вс Выходной</InfoLine>
            <InfoLine $ls={0.28}>г. Москва, ул. Ленинская, дом 0, корп 0, офис 0</InfoLine>
            <InfoLine $ls={0.77} $color="#5b86ee">mail@company.ru</InfoLine>
            <InfoLine $ls={0.6}>ИНН 000000000 ОГРН 000000000</InfoLine>
            <SocialRow>
              <SocialTile $bg="#2787f5"><FaVk /></SocialTile>
              <SocialTile $bg="#f99420"><FaOdnoklassniki /></SocialTile>
              <SocialTile $bg="#07111b"><RutubeMark /></SocialTile>
            </SocialRow>
          </InfoColumn>
          <MapBox>
            <MoscowMap />
            <MapTop>
              <MapButton><GeoIcon /></MapButton>
              <SearchBox>
                <SearchInput>Адрес или объект</SearchInput>
                <SearchSubmit>Найти</SearchSubmit>
              </SearchBox>
              <TopSpacer />
              <MapButton $w="88px"><TrafficIcon /> Пробки</MapButton>
              <MapButton $w="87px"><LayersIcon /> Слои <ChevronDown /></MapButton>
              <MapButton><ExpandIcon /></MapButton>
            </MapTop>
            <ZoomBar>
              <ZoomTrack />
              <ZoomThumb>::::</ZoomThumb>
              <ZoomButton><PlusIcon /></ZoomButton>
              <ZoomButton><PlusIcon minus /></ZoomButton>
            </ZoomBar>
            <MapBottom>
              <RouteButton $w="112px"><RoutePin /> Как добраться</RouteButton>
              <RouteButton $w="132px"><TaxiIcon /> Доехать на такси</RouteButton>
              <MapLink>Создать свою карту</MapLink>
            </MapBottom>
            <ScaleBar><ScaleLine $left /> 3 км <ScaleLine /></ScaleBar>
            <RulerButton><RulerIcon /></RulerButton>
            <Attribution>© Яндекс <u>Условия использования</u></Attribution>
          </MapBox>
        </ContactsRow>
      </LightSection>

      <DarkSection>
        <Header>
          <Logo>Barbershop</Logo>
          <ShopLink>Наш магазин</ShopLink>
          <Nav>
            {navItems.map((item) => (
              <span key={item}>{item}</span>
            ))}
          </Nav>
          <HeaderIcons>
            <HeaderCell><BagIcon /></HeaderCell>
            <HeaderCell $active><BookIcon /></HeaderCell>
          </HeaderIcons>
        </Header>

        <CenterWrap>
          <SectionHead>
            <HeadLine />
            <SectionTitle>Контакты</SectionTitle>
            <HeadLine />
          </SectionHead>
          <SectionLead>Вы можете связаться с нами любым удобным для Вас способом или заказать звонок</SectionLead>
        </CenterWrap>

        <InfoGrid>
          <InfoCell $first>
            <InfoBlock>
              <BlockLabel $ls={1.1}>График работы:</BlockLabel>
              <BlockValue $ls={0}>
                Пн-Пт с 8:00 до 22:00<br />
                Сб-Вс с 9:00 до 23:00<br />
                инн <SmallZero>000000000</SmallZero>
              </BlockValue>
            </InfoBlock>
            <InfoBlock>
              <BlockLabel $ls={0.5}>Соц. сети:</BlockLabel>
              <DarkSocials>
                <DarkSocial><FaYoutube /></DarkSocial>
                <DarkSocial><FaVk /></DarkSocial>
                <DarkSocial><WhatsappFilled size={21} bubble="#777" phone="#111" /></DarkSocial>
                <DarkSocial><FaTelegramPlane /></DarkSocial>
              </DarkSocials>
            </InfoBlock>
          </InfoCell>
          <InfoCell>
            <InfoBlock>
              <BlockLabel>Телефон:</BlockLabel>
              <PhoneStack>
                <PhoneLine $ls={0}>+7 (000) 000-00-00 <RoundIcon $bg="#40d85a"><FaWhatsapp /></RoundIcon></PhoneLine>
                <PhoneLine $ls={-0.55}>8 (000) 111-11-11 <RoundIcon $bg="#5a2782"><FaViber /></RoundIcon></PhoneLine>
              </PhoneStack>
            </InfoBlock>
            <InfoBlock>
              <BlockLabel>Почта:</BlockLabel>
              <GoldLink $top={12} $ls={0.94}>login@domain.ru</GoldLink>
            </InfoBlock>
          </InfoCell>
          <InfoCell>
            <InfoBlock>
              <BlockLabel>Адрес:</BlockLabel>
              <BlockValue $ls={0.55}>
                г. Москва, Ленинский проспект, дом,<br />
                строение, номер кабинета
              </BlockValue>
              <GoldLink $top={10} $ls={0.48}>Посмотреть на карте</GoldLink>
            </InfoBlock>
            <InfoBlock>
              <BlockLabel $ls={1.1}>Принимаем к оплате:</BlockLabel>
              <PayRow>
                <PayCard><MirMark>МИ<MirFlag /></MirMark></PayCard>
                <PayCard><AlfaMark>А</AlfaMark></PayCard>
                <PayCard><SberIcon /></PayCard>
                <PayCard><TinkoffMark>TINKOFF</TinkoffMark></PayCard>
              </PayRow>
            </InfoBlock>
          </InfoCell>
        </InfoGrid>

        <Footer>
          <Copyright>Copyright © 2021 - 2025 Название компании</Copyright>
          <ToTop><UpIcon /></ToTop>
          <MadeBy>Создание сайтов в Казахстане megagroup.kz</MadeBy>
        </Footer>
      </DarkSection>

      <PaletteTip>Выбранная палитра 17</PaletteTip>
      <EditorLine />
      <ExpandTab>Развернуть <ChevronDown w={9} h={6} /></ExpandTab>
    </Page>
  );
}
